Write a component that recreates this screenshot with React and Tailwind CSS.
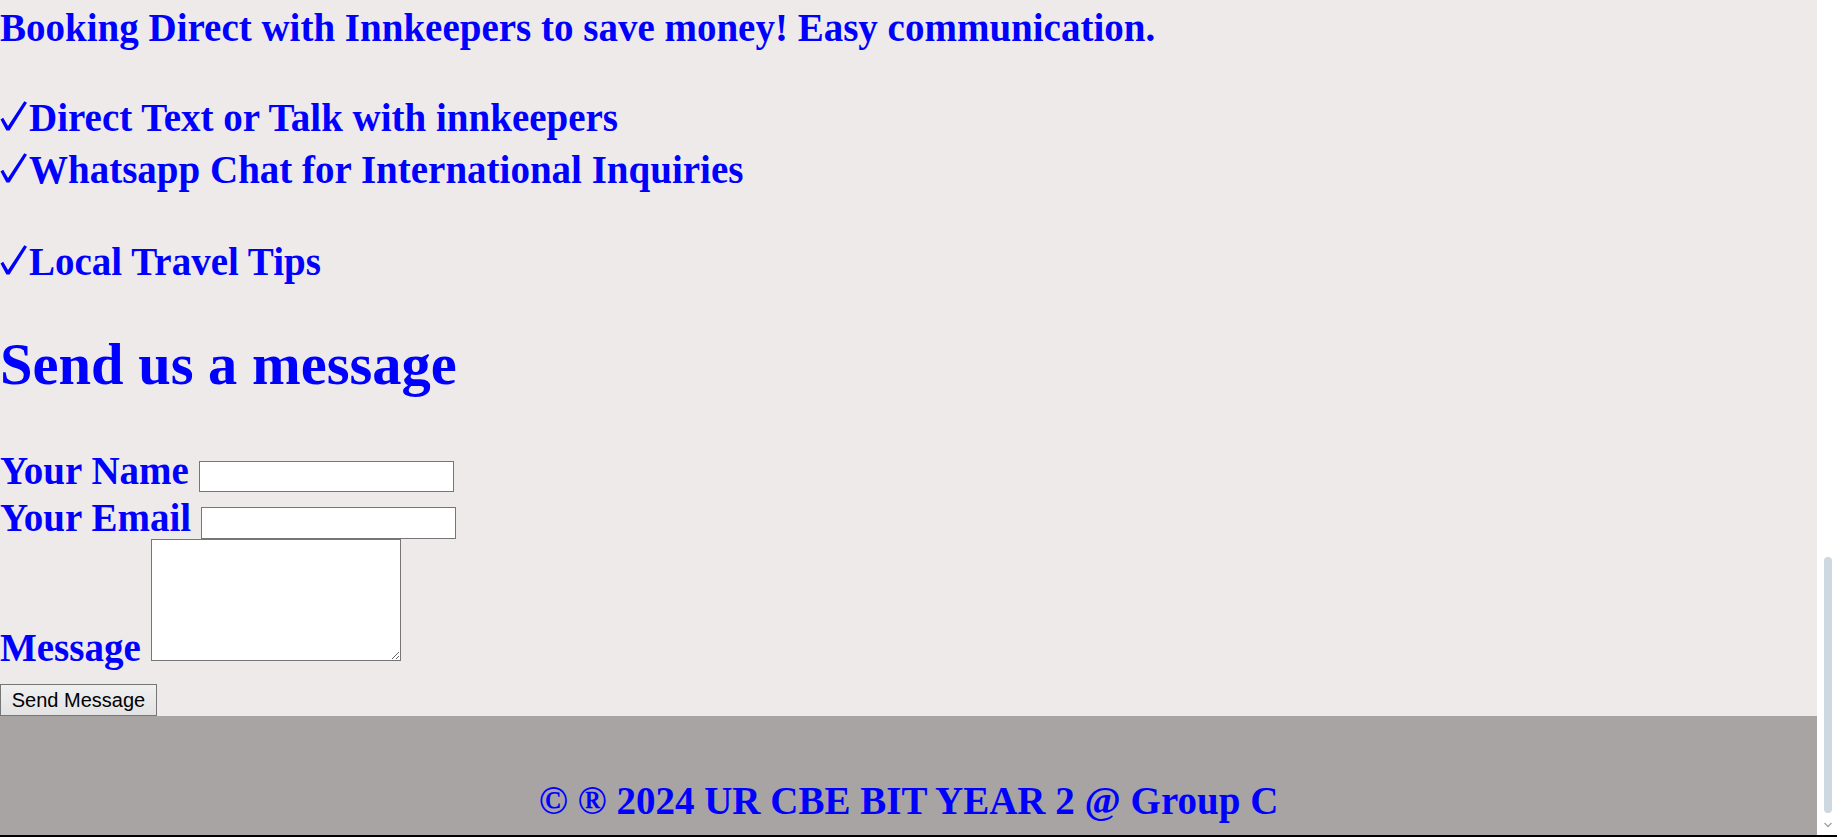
import React from 'react';

const serif = "font-['Liberation_Serif','Times_New_Roman',serif]";

function Tick({ label }) {
  return (
    <div className="leading-[52px] text-[39px] whitespace-nowrap">
      <span className="inline-block w-[29px] leading-[0]">
        <svg width="27" height="30" viewBox="0 0 27 30" className="inline-block align-baseline">
          <polygon points="0.5,18.5 3.2,16.8 8,25 24.3,0.3 27,1.8 9.5,29.6 6.4,29.6" fill="#0000ff" />
        </svg>
      </span>
      {label}
    </div>
  );
}

export default function App() {
  return (
    <div className="h-[837px] w-full flex flex-col overflow-hidden bg-white">
      <div className="flex-1 flex min-h-0">
        <div className={`flex-1 flex flex-col bg-[#efeaea] text-[#0000ff] font-bold ${serif}`}>
          {/* page content */}
          <div className="flex-1 pt-[2px]">
            <p className="text-[39px] leading-[52px] whitespace-nowrap">
              Booking Direct with Innkeepers to save money! Easy communication.
            </p>

            <div className="mt-[38px]">
              <Tick label="Direct Text or Talk with innkeepers" />
              <Tick label="Whatsapp Chat for International Inquiries" />
            </div>
            <div className="mt-[40px]">
              <Tick label="Local Travel Tips" />
            </div>

            <h2 className="mt-[43px] text-[58.5px] leading-[67px]">Send us a message</h2>

            <form className="mt-[51px]" onSubmit={(e) => e.preventDefault()}>
              <div className="flex items-end gap-[10px]">
                <label className="text-[39px] leading-[43px] whitespace-nowrap">Your Name</label>
                <input type="text" className="h-[31px] w-[255px] bg-white border border-[#767676] outline-none" />
              </div>
              <div className="flex items-end gap-[10px] mt-[4px]">
                <label className="text-[39px] leading-[43px] whitespace-nowrap">Your Email</label>
                <input type="email" className="h-[32px] w-[255px] bg-white border border-[#767676] outline-none" />
              </div>
              <div className="flex items-end gap-[10px]">
                <label className="text-[39px] leading-[43px] whitespace-nowrap">Message</label>
                <textarea className="h-[122px] w-[250px] mb-[8px] bg-white border border-[#767676] outline-none" />
              </div>
              <button
                type="submit"
                className="mt-[15px] h-[32px] w-[157px] bg-gradient-to-b from-[#f0f0f0] to-[#e3e3e3] border border-[#767676] text-black font-normal text-[20px] font-['Liberation_Sans',Arial,sans-serif]"
              >
                Send Message
              </button>
            </form>
          </div>

          {/* footer */}
          <footer className="h-[119px] bg-[#a7a4a3] pt-[62px] text-center">
            <p className="text-[39px] leading-[45px] whitespace-nowrap">© ® 2024 UR CBE BIT YEAR 2 @ Group C</p>
          </footer>
        </div>

        {/* scrollbar */}
        <div className="w-[20px] bg-white flex flex-col items-start pl-[7px] pt-[557px]">
          <div className="w-[8px] h-[256px] rounded-full bg-[#cdd8e1]" />
          <svg className="mt-[8px] -ml-[1px]" width="10" height="8" viewBox="0 0 10 8">
            <path d="M1.5 2 L5 5.5 L8.5 2" fill="none" stroke="#9aa3ab" strokeWidth="1.3" />
          </svg>
        </div>
      </div>
      <div className="h-[2px] bg-black" />
    </div>
  );
}
